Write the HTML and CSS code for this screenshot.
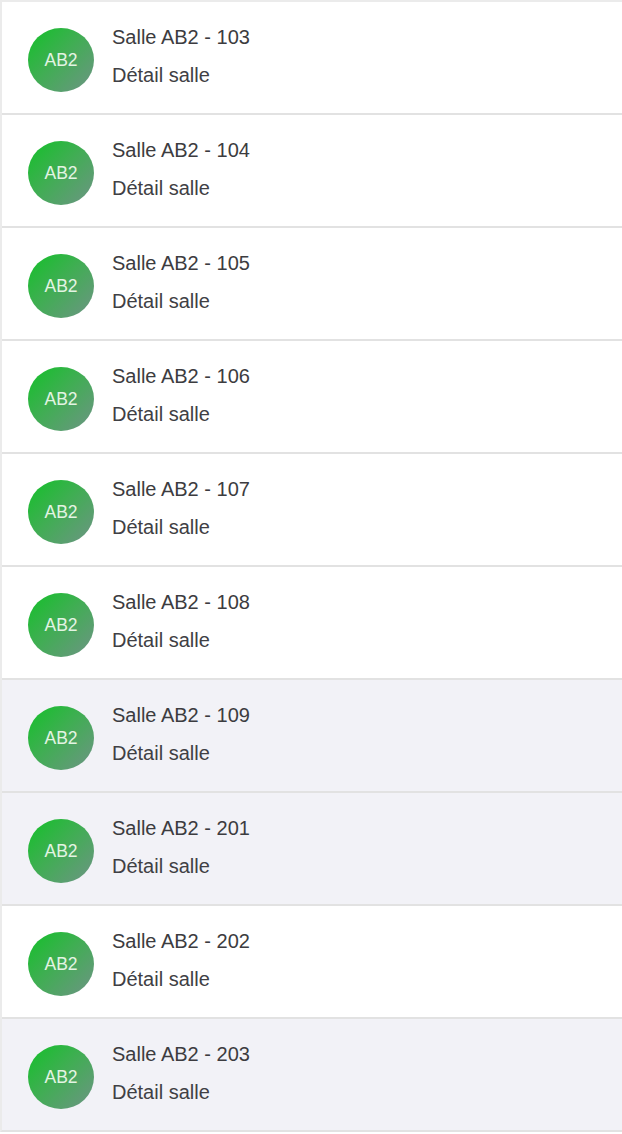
FILE: index.html
```html
<!DOCTYPE html>
<html lang="fr">
<head>
<meta charset="utf-8">
<title>Salles</title>
<link rel="stylesheet" href="styles.css">
</head>
<body>
<ul class="list">
  <li class="row"><div class="avatar">AB2</div><div class="info"><div class="title">Salle AB2 - 103</div><div class="sub">Détail salle</div></div></li>
  <li class="row"><div class="avatar">AB2</div><div class="info"><div class="title">Salle AB2 - 104</div><div class="sub">Détail salle</div></div></li>
  <li class="row"><div class="avatar">AB2</div><div class="info"><div class="title">Salle AB2 - 105</div><div class="sub">Détail salle</div></div></li>
  <li class="row"><div class="avatar">AB2</div><div class="info"><div class="title">Salle AB2 - 106</div><div class="sub">Détail salle</div></div></li>
  <li class="row"><div class="avatar">AB2</div><div class="info"><div class="title">Salle AB2 - 107</div><div class="sub">Détail salle</div></div></li>
  <li class="row"><div class="avatar">AB2</div><div class="info"><div class="title">Salle AB2 - 108</div><div class="sub">Détail salle</div></div></li>
  <li class="row shaded"><div class="avatar">AB2</div><div class="info"><div class="title">Salle AB2 - 109</div><div class="sub">Détail salle</div></div></li>
  <li class="row shaded"><div class="avatar">AB2</div><div class="info"><div class="title">Salle AB2 - 201</div><div class="sub">Détail salle</div></div></li>
  <li class="row"><div class="avatar">AB2</div><div class="info"><div class="title">Salle AB2 - 202</div><div class="sub">Détail salle</div></div></li>
  <li class="row shaded"><div class="avatar">AB2</div><div class="info"><div class="title">Salle AB2 - 203</div><div class="sub">Détail salle</div></div></li>
</ul>
</body>
</html>
```

FILE: styles.css
```css
html, body {
  margin: 0;
  padding: 0;
  background: #ffffff;
}
body {
  font-family: "Liberation Sans", Arial, sans-serif;
}
.list {
  list-style: none;
  margin: 0;
  padding: 0;
  border-top: 2px solid #ebebeb;
  border-left: 2px solid #ebebeb;
  border-bottom: 2px solid #e2e2e2;
}
.row {
  display: flex;
  align-items: flex-start;
  gap: 18px;
  padding: 23px 0 0 26px;
  box-sizing: border-box;
  height: 113px;
  border-bottom: 2px solid #e2e2e2;
  background: #ffffff;
}
.row:last-child {
  border-bottom: none;
  height: 111px;
}
.row.shaded {
  background: #f2f2f7;
}
.avatar {
  width: 66px;
  height: 64px;
  margin-top: 3px;
  flex: none;
  border-radius: 50%;
  background: linear-gradient(135deg, #12c128 0%, #3fae52 45%, #6e9485 100%);
  color: #e3f4e3;
  font-size: 17.5px;
  display: flex;
  align-items: center;
  justify-content: center;
}
.info {
  display: flex;
  flex-direction: column;
  gap: 14px;
}
.title, .sub {
  font-size: 20px;
  line-height: 24px;
  color: #3c3c40;
}
.sub {
  color: #404044;
}
```
